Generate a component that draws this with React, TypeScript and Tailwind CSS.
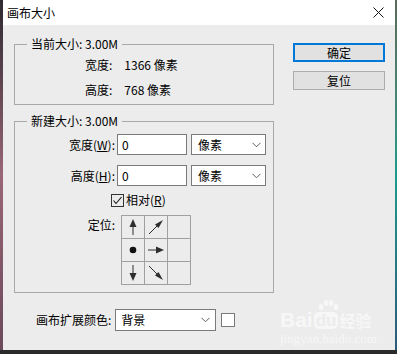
import React from "react";

const FONT = '"Noto Sans CJK SC", "Noto Sans", "Liberation Sans", sans-serif';

function Chevron() {
  return (
    <svg width="9" height="6" viewBox="0 0 9 6">
      <polyline points="0.5,0.8 4.5,4.8 8.5,0.8" fill="none" stroke="#606060" strokeWidth="1" />
    </svg>
  );
}

function Select({ text, w, pr }: { text: string; w: string; pr: string }) {
  return (
    <div className={`${w} h-[21px] bg-white border border-[#7a7a7a] flex items-center justify-between pl-[6px] ${pr}`}>
      <span className="text-[12px] leading-[16px] text-black">{text}</span>
      <Chevron />
    </div>
  );
}

function Input() {
  return (
    <div className="w-[70px] h-[21px] bg-white border border-[#7a7a7a] flex items-center pl-[4px]">
      <span className="text-[12px] leading-[16px] text-black">0</span>
    </div>
  );
}

function Cell({ children }: { children?: React.ReactNode }) {
  return <div className="w-[22px] h-[22px] bg-[#ececec] flex items-center justify-center">{children}</div>;
}

const C = "#2e2e2e";

export default function App() {
  return (
    <div className="relative w-[397px] h-[354px] bg-[#2a2a2c] flex overflow-hidden" style={{ fontFamily: FONT }}>
      <div className="w-[3px] h-[350px] bg-linear-to-b from-[#2e2a30] via-[#9a6678] to-[#6a4a5a]" />
      <div className="w-[392px] h-[350px] bg-[#ececec] flex flex-col">
        {/* title bar */}
        <div className="h-[25px] bg-white flex items-center justify-between pl-[4px] pr-[11px]">
          <span className="text-[12px] leading-[16px] text-black">画布大小</span>
          <svg width="11" height="11" viewBox="0 0 11 11">
            <path d="M0.5 0.5 L10.5 10.5 M10.5 0.5 L0.5 10.5" stroke="#111" strokeWidth="1" />
          </svg>
        </div>
        {/* body */}
        <div className="flex pl-[11px]">
          <div className="flex flex-col w-[260px]">
            <fieldset className="mt-[11px] border border-[#a8a8a8] pb-[2px]">
              <legend className="ml-[12px] px-[4px] text-[12px] leading-[16px] text-black">当前大小: 3.00M</legend>
              <div className="pl-[70px] h-[25px] flex items-center text-[12px] leading-[16px] text-black">
                <span>宽度:</span>
                <span className="ml-[12px]">1366 像素</span>
              </div>
              <div className="pl-[70px] h-[25px] flex items-center text-[12px] leading-[16px] text-black">
                <span>高度:</span>
                <span className="ml-[12px]">768 像素</span>
              </div>
            </fieldset>

            <fieldset className="mt-[8px] border border-[#a8a8a8] pt-[5px] pb-[7px]">
              <legend className="ml-[12px] px-[4px] text-[12px] leading-[16px] text-black">新建大小: 3.00M</legend>
              <div className="flex items-center h-[21px]">
                <div className="w-[100px] text-right text-[12px] leading-[16px] text-black">
                  宽度(<span className="underline">W</span>):
                </div>
                <div className="ml-[2px]"><Input /></div>
                <div className="ml-[4px]"><Select text="像素" w="w-[75px]" pr="pr-[4px]" /></div>
              </div>
              <div className="flex items-center h-[21px] mt-[10px]">
                <div className="w-[100px] text-right text-[12px] leading-[16px] text-black">
                  高度(<span className="underline">H</span>):
                </div>
                <div className="ml-[2px]"><Input /></div>
                <div className="ml-[4px]"><Select text="像素" w="w-[75px]" pr="pr-[4px]" /></div>
              </div>
              <div className="flex items-center h-[14px] mt-[7px] pl-[96px]">
                <div className="w-[13px] h-[13px] border border-[#333] bg-[#ececec] flex items-center justify-center">
                  <svg width="11" height="11" viewBox="0 0 11 11">
                    <polyline points="1.5,5.5 4,8.5 9.5,2" fill="none" stroke="#111" strokeWidth="1.1" />
                  </svg>
                </div>
                <span className="ml-[2px] text-[12px] leading-[16px] text-black">
                  相对(<span className="underline">R</span>)
                </span>
              </div>
              <div className="flex mt-[8px]">
                <div className="w-[100px] text-right text-[12px] leading-[16px] text-black pt-[2px]">定位:</div>
                <div className="ml-[6px] grid grid-cols-[22px_22px_22px] gap-px bg-[#a0a0a0] p-px">
                  <Cell>
                    <svg width="22" height="22" viewBox="0 0 22 22">
                      <line x1="11" y1="9" x2="11" y2="19" stroke={C} strokeWidth="1" />
                      <polygon points="11,3 7.5,11 14.5,11" fill={C} />
                    </svg>
                  </Cell>
                  <Cell>
                    <svg width="22" height="22" viewBox="0 0 22 22">
                      <line x1="4" y1="18" x2="14" y2="8" stroke={C} strokeWidth="1" />
                      <polygon points="18,4 10,8.5 13.5,12" fill={C} />
                    </svg>
                  </Cell>
                  <Cell />
                  <Cell>
                    <svg width="22" height="22" viewBox="0 0 22 22">
                      <circle cx="11" cy="11" r="3.3" fill="#111" />
                    </svg>
                  </Cell>
                  <Cell>
                    <svg width="22" height="22" viewBox="0 0 22 22">
                      <line x1="3" y1="11" x2="13" y2="11" stroke={C} strokeWidth="1" />
                      <polygon points="19,11 11,7.5 11,14.5" fill={C} />
                    </svg>
                  </Cell>
                  <Cell />
                  <Cell>
                    <svg width="22" height="22" viewBox="0 0 22 22">
                      <line x1="11" y1="3" x2="11" y2="13" stroke={C} strokeWidth="1" />
                      <polygon points="11,19 7.5,11 14.5,11" fill={C} />
                    </svg>
                  </Cell>
                  <Cell>
                    <svg width="22" height="22" viewBox="0 0 22 22">
                      <line x1="4" y1="4" x2="14" y2="14" stroke={C} strokeWidth="1" />
                      <polygon points="18,18 10,13.5 13.5,10" fill={C} />
                    </svg>
                  </Cell>
                  <Cell />
                </div>
              </div>
            </fieldset>

            <div className="flex items-center mt-[16px] pl-[22px]">
              <span className="text-[12px] leading-[16px] text-black">画布扩展颜色:</span>
              <div className="ml-[4px]">
                <div className="w-[101px] h-[22px] bg-white border border-[#7a7a7a] flex items-center justify-between pl-[5px] pr-[5px]">
                  <span className="text-[12px] leading-[16px] text-black">背景</span>
                  <Chevron />
                </div>
              </div>
              <div className="ml-[5px] w-[14px] h-[14px] bg-white border border-[#7a7a7a]" />
            </div>
          </div>

          <div className="ml-[19px] pt-[18px] flex flex-col gap-[9px]">
            <div className="w-[92px] h-[19px] bg-[#e1e1e1] border-2 border-[#0078d7] flex items-center justify-center">
              <span className="text-[12px] leading-[14px] text-black">确定</span>
            </div>
            <div className="w-[92px] h-[19px] bg-[#e1e1e1] border border-[#adadad] flex items-center justify-center">
              <span className="text-[12px] leading-[14px] text-black">复位</span>
            </div>
          </div>
        </div>
      </div>
      <div className="w-[2px] h-[350px] bg-linear-to-b from-[#5a6a5a] via-[#1a9a8a] to-[#2a5a7a]" />

      {/* watermark */}
      <div className="absolute left-[280px] top-[299px] flex flex-col items-start text-white/60 pointer-events-none">
        <svg width="22" height="13" viewBox="0 0 22 13" className="ml-[37px]" fill="#ffffff" fillOpacity="0.6">
          <ellipse cx="4" cy="8" rx="2.3" ry="3" />
          <ellipse cx="9" cy="4" rx="2.3" ry="3" />
          <ellipse cx="14" cy="4" rx="2.3" ry="3" />
          <ellipse cx="19" cy="8" rx="2.3" ry="3" />
        </svg>
        <div className="flex items-center h-[18px] -mt-[1px]">
          <span className="text-[21px] leading-[18px] font-bold" style={{ fontFamily: '"Liberation Sans", sans-serif' }}>Bai</span>
          <span className="ml-[1px] h-[17px] px-[2px] rounded-[5px] bg-white/60 text-[17px] leading-[17px] font-bold text-[#ececec]" style={{ fontFamily: '"Liberation Sans", sans-serif' }}>du</span>
          <span className="text-[16px] leading-[18px] font-bold ml-[1px]">经验</span>
        </div>
        <span className="text-[13px] leading-[14px] mt-[3px]" style={{ fontFamily: '"Liberation Serif", serif' }}>jingyan.baidu.com</span>
      </div>
    </div>
  );
}
